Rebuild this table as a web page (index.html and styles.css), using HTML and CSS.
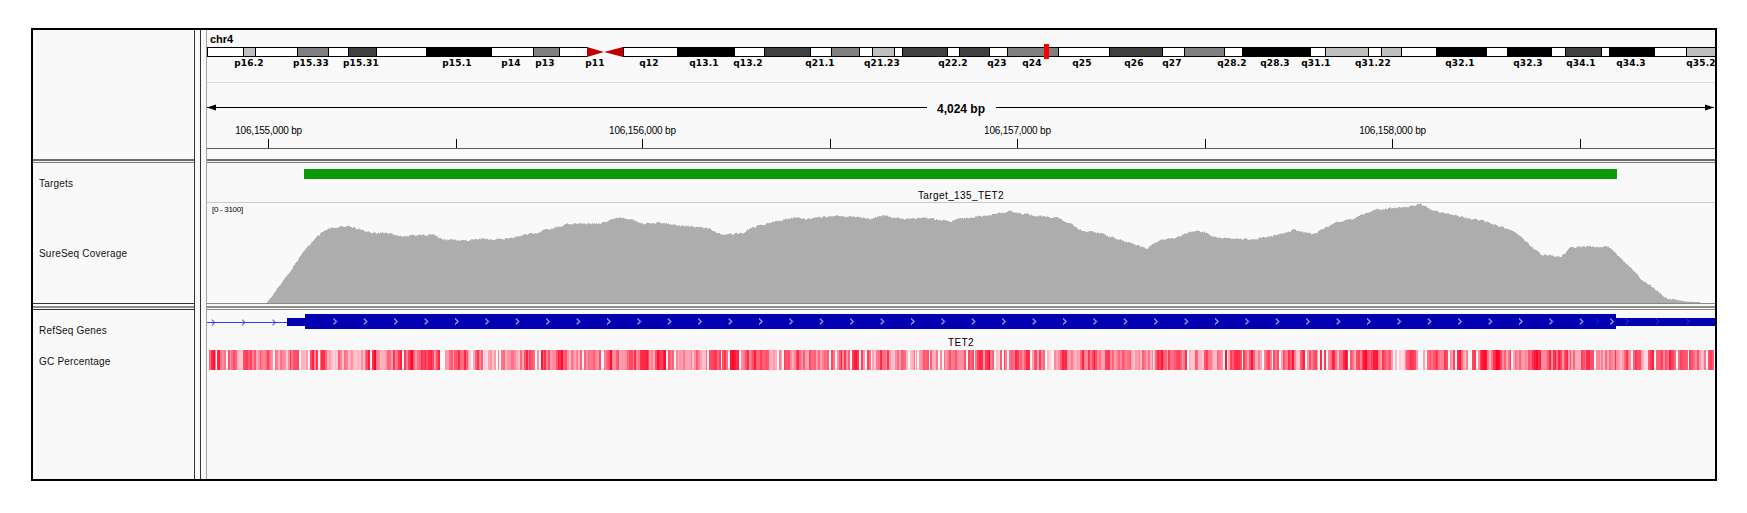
FILE: index.html
```html
<!DOCTYPE html>
<html lang="en">
<head>
<meta charset="utf-8">
<title>IGV - chr4 TET2</title>
<link rel="stylesheet" href="styles.css">
</head>
<body>
<div class="frame">
  <div class="name row1"></div>
  <div class="vsplit"></div>
  <div class="data row1">
    <svg class="plot" width="1508" height="129" viewBox="207 30 1508 129">
      <text class="chrom" x="210" y="43">chr4</text>
      <g class="ideo" transform="translate(0.5,0.5)">
        <rect class="b0" x="207" y="47" width="36" height="9"/>
        <rect class="b25" x="243" y="47" width="12" height="9"/>
        <rect class="b0" x="255" y="47" width="42" height="9"/>
        <rect class="b50" x="297" y="47" width="31" height="9"/>
        <rect class="b0" x="328" y="47" width="20" height="9"/>
        <rect class="b75" x="348" y="47" width="28" height="9"/>
        <rect class="b0" x="376" y="47" width="50" height="9"/>
        <rect class="b100" x="426" y="47" width="65" height="9"/>
        <rect class="b0" x="491" y="47" width="42" height="9"/>
        <rect class="b50" x="533" y="47" width="26" height="9"/>
        <rect class="b0" x="559" y="47" width="28" height="9"/>
        <rect class="b0" x="623" y="47" width="54" height="9"/>
        <rect class="b100" x="677" y="47" width="57" height="9"/>
        <rect class="b0" x="734" y="47" width="30" height="9"/>
        <rect class="b75" x="764" y="47" width="46" height="9"/>
        <rect class="b0" x="810" y="47" width="21" height="9"/>
        <rect class="b50" x="831" y="47" width="28" height="9"/>
        <rect class="b0" x="859" y="47" width="13" height="9"/>
        <rect class="b25" x="872" y="47" width="22" height="9"/>
        <rect class="b0" x="894" y="47" width="8" height="9"/>
        <rect class="b75" x="902" y="47" width="45" height="9"/>
        <rect class="b0" x="947" y="47" width="12" height="9"/>
        <rect class="b75" x="959" y="47" width="30" height="9"/>
        <rect class="b0" x="989" y="47" width="18" height="9"/>
        <rect class="b50" x="1007" y="47" width="51" height="9"/>
        <rect class="b0" x="1058" y="47" width="51" height="9"/>
        <rect class="b75" x="1109" y="47" width="53" height="9"/>
        <rect class="b0" x="1162" y="47" width="22" height="9"/>
        <rect class="b50" x="1184" y="47" width="40" height="9"/>
        <rect class="b0" x="1224" y="47" width="18" height="9"/>
        <rect class="b100" x="1242" y="47" width="68" height="9"/>
        <rect class="b0" x="1310" y="47" width="15" height="9"/>
        <rect class="b25" x="1325" y="47" width="43" height="9"/>
        <rect class="b0" x="1368" y="47" width="13" height="9"/>
        <rect class="b25" x="1381" y="47" width="20" height="9"/>
        <rect class="b0" x="1401" y="47" width="35" height="9"/>
        <rect class="b100" x="1436" y="47" width="50" height="9"/>
        <rect class="b0" x="1486" y="47" width="21" height="9"/>
        <rect class="b100" x="1507" y="47" width="44" height="9"/>
        <rect class="b0" x="1551" y="47" width="14" height="9"/>
        <rect class="b75" x="1565" y="47" width="36" height="9"/>
        <rect class="b0" x="1601" y="47" width="8" height="9"/>
        <rect class="b100" x="1609" y="47" width="45" height="9"/>
        <rect class="b0" x="1654" y="47" width="32" height="9"/>
        <rect class="b25" x="1686" y="47" width="40" height="9"/>
      </g>
      <polygon class="centro" points="587,47 604,52 587,57"/>
      <polygon class="centro" points="623,47 604,52 623,57"/>
      <rect class="locus" x="1044" y="44" width="5" height="15"/>
      <g class="bandlbl">
        <text x="249" y="66">p16.2</text>
        <text x="311" y="66">p15.33</text>
        <text x="361" y="66">p15.31</text>
        <text x="457" y="66">p15.1</text>
        <text x="511" y="66">p14</text>
        <text x="545" y="66">p13</text>
        <text x="595" y="66">p11</text>
        <text x="649" y="66">q12</text>
        <text x="704" y="66">q13.1</text>
        <text x="748" y="66">q13.2</text>
        <text x="820" y="66">q21.1</text>
        <text x="882" y="66">q21.23</text>
        <text x="953" y="66">q22.2</text>
        <text x="997" y="66">q23</text>
        <text x="1032" y="66">q24</text>
        <text x="1082" y="66">q25</text>
        <text x="1134" y="66">q26</text>
        <text x="1172" y="66">q27</text>
        <text x="1232" y="66">q28.2</text>
        <text x="1275" y="66">q28.3</text>
        <text x="1316" y="66">q31.1</text>
        <text x="1373" y="66">q31.22</text>
        <text x="1460" y="66">q32.1</text>
        <text x="1528" y="66">q32.3</text>
        <text x="1581" y="66">q34.1</text>
        <text x="1631" y="66">q34.3</text>
        <text x="1701" y="66">q35.2</text>
      </g>
      <line class="sep" x1="207" y1="82.5" x2="1715" y2="82.5"/>
      <line class="span" x1="207" y1="107.5" x2="927" y2="107.5"/>
      <line class="span" x1="996" y1="107.5" x2="1714" y2="107.5"/>
      <polygon class="arrow" points="207,107.5 216,104.5 216,110.5"/>
      <polygon class="arrow" points="1714,107.5 1705,104.5 1705,110.5"/>
      <text class="spanlbl" x="961" y="113">4,024 bp</text>
      <g class="ruler">
        <text x="268.6" y="133.5">106,155,000 bp</text>
        <text x="642.4" y="133.5">106,156,000 bp</text>
        <text x="1017.4" y="133.5">106,157,000 bp</text>
        <text x="1392.5" y="133.5">106,158,000 bp</text>
      </g>
      <path class="ticks" d="M268.5 139V148M456.5 139V148M642.5 139V148M830.5 139V148M1017.5 139V148M1205.5 139V148M1392.5 139V148M1580.5 139V148"/>
      <line class="rulerbase" x1="207" y1="148.5" x2="1715" y2="148.5"/>
    </svg>
  </div>

  <div class="name split1"></div>
  <div class="data split1"></div>

  <div class="name row3">
    <div class="label h40">Targets</div>
    <div class="label h100">SureSeq Coverage</div>
  </div>
  <div class="data row3">
    <svg class="plot" width="1508" height="140" viewBox="207 163 1508 140">
      <rect class="target" x="304" y="169" width="1313" height="10"/>
      <text class="feat" x="961" y="199">Target_135_TET2</text>
      <line class="trackline" x1="207" y1="202.5" x2="1715" y2="202.5"/>
      <text class="range" x="212" y="212">[0 - 3100]</text>
      <polygon id="cov" class="cov" points="266,303 275,292 286.7,275 300,256 315,238.3 323.3,231 333.3,227.7 346.7,225.7 353.3,227.7 373.3,233.3 386.7,232.7 403.3,237 410,234.7 433.3,235 441.7,239.3 463.3,240.7 480,238.3 490,240 516.7,236.7 533.3,233.3 550,229 566.7,224.3 600,223.3 620,217.7 630,219 643.3,223.3 660,222.3 673.3,225 700,227.7 710,229.3 721.7,235 726.7,234 743.3,233.3 750,228.3 770,222.3 793.3,217.7 810,219 830,215.7 856.7,216.7 870,219 881.7,215.7 906.7,219 923.3,217.3 950,221.7 956.7,219 990,215 1010,211 1023.3,214.3 1043.3,216.3 1060,219 1083.3,231 1096.7,232.3 1120,240 1146.7,248.3 1156.7,241.7 1176.7,236.7 1196.7,229.3 1216.7,237.7 1230,238.3 1253.3,239.3 1273.3,235.7 1293.3,230 1313.3,234.3 1333.3,223.3 1353.3,219 1373.3,210 1400,207.3 1420,204 1433.3,211 1466.7,217.7 1483.3,221 1513.3,231 1523.3,240 1540,254.3 1560,257 1570,248.3 1580,246.7 1608.3,246.7 1620,258.3 1640,278.3 1666.7,298.3 1686.7,301.7 1700,302 1700,303"/>
    </svg>
  </div>

  <div class="name split2"></div>
  <div class="data split2"></div>

  <div class="name row5">
    <div class="label h40">RefSeq Genes</div>
    <div class="label h22">GC Percentage</div>
  </div>
  <div class="data row5">
    <svg class="plot" width="1508" height="169" viewBox="207 310 1508 169">
      <defs>
        <pattern id="chevIntron" patternUnits="userSpaceOnUse" x="211.8" y="314" width="30.4" height="15">
          <polyline class="chev-intron" points="0,5.5 2.6,8.5 0,11.5"/>
        </pattern>
        <pattern id="chevCds" patternUnits="userSpaceOnUse" x="211.8" y="314" width="30.4" height="15">
          <polyline class="chev-cds" points="0,4.5 3,7.5 0,10.5"/>
        </pattern>
        <pattern id="chevUtr" patternUnits="userSpaceOnUse" x="1625.5" y="314" width="30.4" height="15">
          <polyline class="chev-utr" points="0,4.5 3,7.5 0,10.5"/>
        </pattern>
      </defs>
      <line class="intron" x1="207" y1="322.5" x2="288" y2="322.5"/>
      <rect x="207" y="314" width="80" height="15" fill="url(#chevIntron)"/>
      <rect class="exon" x="287" y="318" width="18" height="8"/>
      <rect class="exon" x="305" y="314" width="1311" height="15"/>
      <rect class="exon" x="1616" y="318" width="99" height="8"/>
      <rect x="320" y="314" width="1296" height="15" fill="url(#chevCds)"/>
      <rect x="1620" y="314" width="95" height="15" fill="url(#chevUtr)"/>
      <polyline class="chev-utr" points="1596,318.5 1599,321.5 1596,324.5"/>
      <text class="feat" x="961" y="346">TET2</text>
      <g id="gc"></g>
    </svg>
  </div>
</div>
<script src="script.js"></script>
</body>
</html>
```

FILE: styles.css
```css
html, body {
  margin: 0;
  padding: 0;
  background: #ffffff;
}

body {
  font-family: "Liberation Sans", Arial, sans-serif;
}

.frame {
  margin: 28px 0 0 31px;
  width: 1686px;
  height: 453px;
  box-sizing: border-box;
  border: 2px solid #000;
  background: #f9f9f9;
  display: grid;
  grid-template-columns: 162px 11px 1509px;
  grid-template-rows: 129px 4px 141px 5px 170px;
}

.frame > div {
  box-sizing: border-box;
  min-width: 0;
  min-height: 0;
  overflow: hidden;
}

.name {
  grid-column: 1;
  border-right: 1px solid #333;
  display: flex;
  flex-direction: column;
}

.data {
  grid-column: 3;
  border-left: 1px solid #a4a4a4;
}

.vsplit {
  grid-column: 2;
  grid-row: 1 / -1;
  background: linear-gradient(to right, transparent 5px, #333 5px, #333 6px, transparent 6px);
}

.row1 { grid-row: 1; }

.split1 {
  grid-row: 2;
  background: linear-gradient(to bottom, #6c6c6c 0, #6c6c6c 2px, #f2f2f2 2px, #f2f2f2 3px, #7c7c7c 3px, #7c7c7c 4px);
}

.row3 { grid-row: 3; }
.name.row3 { border-bottom: 1px solid #333; }
.data.row3 { border-bottom: 1px solid #8a8a8a; }

.split2 {
  grid-row: 4;
  background: linear-gradient(to bottom, transparent 2px, #8e8e8e 2px, #8e8e8e 4px, transparent 4px);
}

.row5 { grid-row: 5; }
.name.row5 { border-top: 1px solid #333; }
.data.row5 { border-top: 1px solid #8a8a8a; }

.label {
  display: flex;
  align-items: center;
  padding-left: 6px;
  font-size: 10px;
  letter-spacing: 0.2px;
  color: #111;
  white-space: nowrap;
}

.h40 { height: 40px; }
.h100 { height: 100px; }
.h22 { height: 22px; }

.plot {
  display: block;
  font-family: "Liberation Sans", Arial, sans-serif;
}

/* header */
.chrom {
  font-size: 11px;
  font-weight: bold;
  fill: #000;
}

.ideo rect {
  stroke: #000;
  stroke-width: 1;
  shape-rendering: crispEdges;
}

.b0 { fill: #ffffff; }
.b25 { fill: #c0c0c0; }
.b50 { fill: #808080; }
.b75 { fill: #404040; }
.b100 { fill: #000000; }

.centro { fill: #bf0000; }
.locus { fill: #ff0000; shape-rendering: crispEdges; }

.bandlbl text {
  font-family: "DejaVu Sans", Verdana, sans-serif;
  font-size: 9px;
  font-weight: bold;
  letter-spacing: 0.2px;
  text-anchor: middle;
  fill: #000;
}

.sep {
  stroke: #dadada;
  stroke-width: 1;
  shape-rendering: crispEdges;
}

.span {
  stroke: #000;
  stroke-width: 1;
  shape-rendering: crispEdges;
}

.arrow { fill: #000; }

.spanlbl {
  font-size: 12px;
  font-weight: bold;
  text-anchor: middle;
  fill: #000;
}

.ruler text {
  font-size: 10px;
  letter-spacing: -0.2px;
  text-anchor: middle;
  fill: #000;
}

.ticks {
  stroke: #000;
  stroke-width: 1;
  shape-rendering: crispEdges;
}

.rulerbase {
  stroke: #5a5a5a;
  stroke-width: 1;
  shape-rendering: crispEdges;
}

/* tracks */
.target { fill: #0b990b; shape-rendering: crispEdges; }

.feat {
  font-size: 10px;
  letter-spacing: 0.4px;
  text-anchor: middle;
  fill: #000;
}

.trackline {
  stroke: #c9c9d3;
  stroke-width: 1;
  shape-rendering: crispEdges;
}

.range {
  font-size: 8px;
  letter-spacing: -0.3px;
  fill: #000;
}

.cov { fill: #adadad; }

.intron {
  stroke: #3a3ae6;
  stroke-width: 1;
  shape-rendering: crispEdges;
}

.chev-intron {
  fill: none;
  stroke: #3a3ae6;
  stroke-width: 1;
}

.exon { fill: #0000b2; shape-rendering: crispEdges; }

.chev-cds {
  fill: none;
  stroke: #d8d8ff;
  stroke-width: 1;
}

.chev-utr {
  fill: none;
  stroke: #2a2ae8;
  stroke-width: 1;
}

.gcbar { shape-rendering: crispEdges; }
```

FILE: script.js
```js
(function () {
  var NS = 'http://www.w3.org/2000/svg';
  var seed = 135;
  function rnd() {
    seed = (seed * 1664525 + 1013904223) >>> 0;
    return seed / 4294967296;
  }

  // Coverage: interpolate the key points per pixel and add a little read-depth noise
  var cov = document.getElementById('cov');
  if (cov) {
    var raw = cov.getAttribute('points').trim().split(/\s+/).map(function (p) {
      var a = p.split(',');
      return [parseFloat(a[0]), parseFloat(a[1])];
    });
    var keys = raw.slice(0, raw.length - 1);
    var out = [];
    var n = 0;
    for (var i = 0; i < keys.length - 1; i++) {
      var a = keys[i], b = keys[i + 1];
      for (var x = Math.ceil(a[0]); x < b[0]; x++) {
        var t = (x - a[0]) / (b[0] - a[0]);
        var y = a[1] + (b[1] - a[1]) * t;
        n = 0.5 * n + (rnd() - 0.5) * 1.6;
        var yy = Math.min(303, y + (y < 300 ? n : 0));
        out.push(x + ',' + yy.toFixed(1));
        out.push((x + 1) + ',' + yy.toFixed(1));
      }
    }
    out.unshift('266,303');
    out.push('1700,303');
    cov.setAttribute('points', out.join(' '));
  }

  // GC percentage heatmap (5 bp windows)
  var g = document.getElementById('gc');
  if (g) {
    var x0 = 209, x1 = 1714, w = 1.874, v = 0.55;
    for (var xx = x0; xx < x1; xx += w) {
      v = 0.45 * v + 0.55 * rnd();
      if (rnd() < 0.1) continue;
      var tt = Math.min(1, Math.max(0, v * 1.25 - 0.1));
      var gg = Math.round(222 * (1 - tt));
      var bb = Math.round(230 * (1 - tt) + 34 * tt);
      var r = document.createElementNS(NS, 'rect');
      r.setAttribute('class', 'gcbar');
      r.setAttribute('x', xx.toFixed(2));
      r.setAttribute('y', '350');
      r.setAttribute('width', Math.min(w, x1 - xx).toFixed(2));
      r.setAttribute('height', '20');
      r.setAttribute('fill', 'rgb(255,' + gg + ',' + bb + ')');
      g.appendChild(r);
    }
  }
})();
```
